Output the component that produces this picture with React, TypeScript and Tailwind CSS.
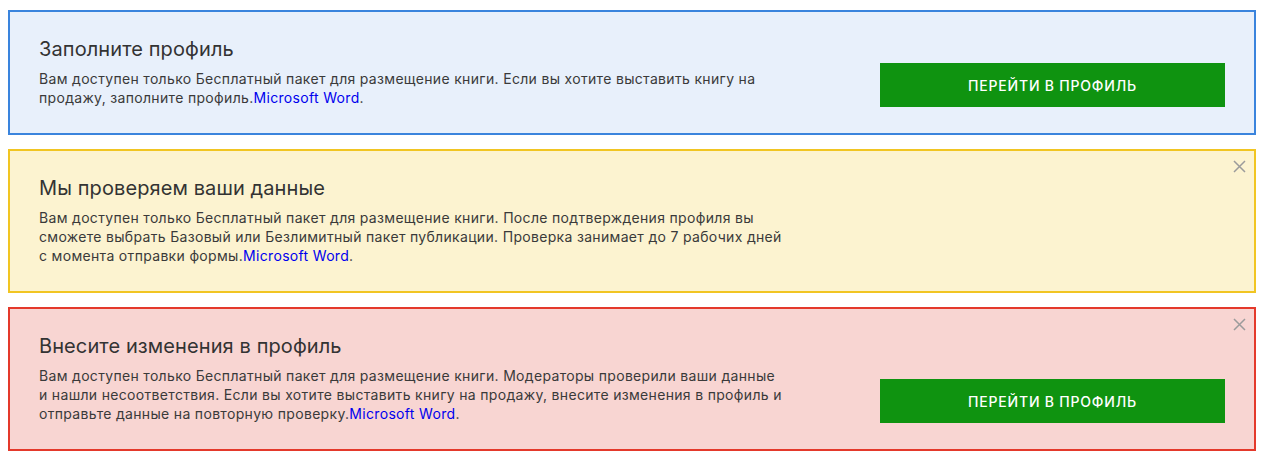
import React from "react";

type Tone = "blue" | "yellow" | "red";

const toneClass: Record<Tone, string> = {
  blue: "border-[#3a84dd] bg-[#e8f0fb]",
  yellow: "border-[#f1c522] bg-[#fcf3d0]",
  red: "border-[#e4392b] bg-[#f8d5d2]",
};

const CloseIcon = () => (
  <svg width="13" height="13" viewBox="0 0 13 13" fill="none">
    <path d="M1 1L12 12M12 1L1 12" stroke="#9b9b9b" strokeWidth="1.5" />
  </svg>
);

function Notice({
  tone,
  title,
  lines,
  button,
  closable,
}: {
  tone: Tone;
  title: string;
  lines: string[];
  button?: boolean;
  closable?: boolean;
}) {
  const last = lines.length - 1;
  return (
    <div className={`relative flex items-end justify-between border-2 pl-[29px] pr-[29px] pt-[25px] pb-[26px] ${toneClass[tone]}`}>
      {closable && (
        <button className="absolute top-[9px] right-[8px] p-0 leading-none">
          <CloseIcon />
        </button>
      )}
      <div>
        <h2 className="mb-2 text-[20px] leading-[24px] tracking-[0.1px] text-[#333]">{title}</h2>
        <p className="text-[14px] leading-[19px] tracking-[0.32px] text-[#3a3a3a]">
          {lines.map((line, i) => (
            <span key={i} className="block whitespace-nowrap">
              {line}
              {i === last && (
                <>
                  <a href="#" className="text-[#0000ee]">Microsoft Word</a>.
                </>
              )}
            </span>
          ))}
        </p>
      </div>
      {button && (
        <button className="h-[44px] w-[345px] shrink-0 bg-[#0f9310] text-[14px] font-medium tracking-[0.8px] text-white uppercase">
          Перейти в профиль
        </button>
      )}
    </div>
  );
}

export default function App() {
  return (
    <div className="flex flex-col gap-3.5 bg-white px-2 pt-[10px] pb-2 font-[Inter,sans-serif]">
      <Notice
        tone="blue"
        title="Заполните профиль"
        lines={[
          "Вам доступен только Бесплатный пакет для размещение книги. Если вы хотите выставить книгу на",
          "продажу, заполните профиль.",
        ]}
        button
      />
      <Notice
        tone="yellow"
        title="Мы проверяем ваши данные"
        lines={[
          "Вам доступен только Бесплатный пакет для размещение книги. После подтверждения профиля вы",
          "сможете выбрать Базовый или Безлимитный пакет публикации. Проверка занимает до 7 рабочих дней",
          "с момента отправки формы.",
        ]}
        closable
      />
      <Notice
        tone="red"
        title="Внесите изменения в профиль"
        lines={[
          "Вам доступен только Бесплатный пакет для размещение книги. Модераторы проверили ваши данные",
          "и нашли несоответствия. Если вы хотите выставить книгу на продажу, внесите изменения в профиль и",
          "отправьте данные на повторную проверку.",
        ]}
        button
        closable
      />
    </div>
  );
}
